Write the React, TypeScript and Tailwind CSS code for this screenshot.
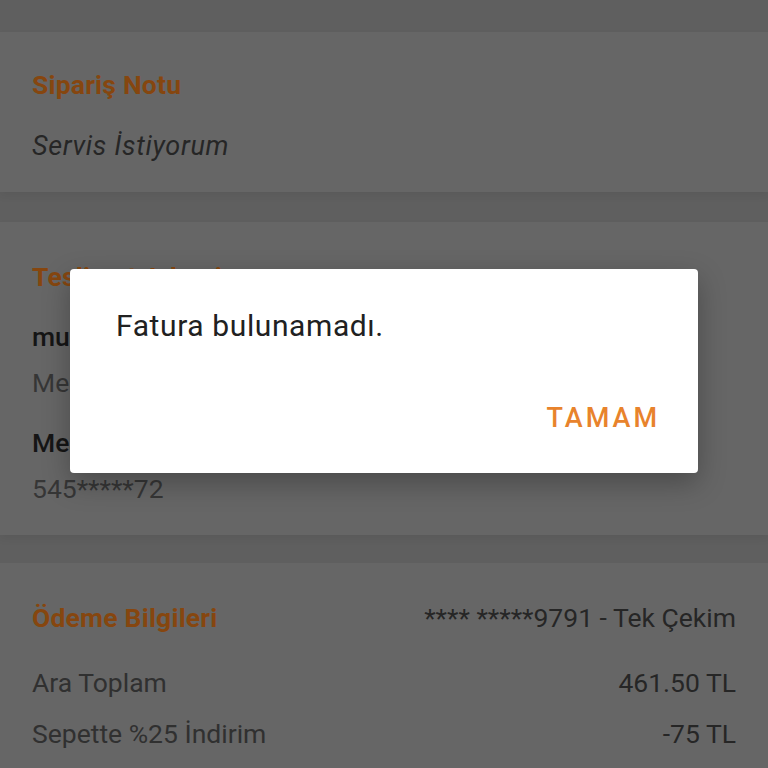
import React from "react";

const Row = ({ left, right, className }: { left: string; right: string; className?: string }) => (
  <div className={`flex items-center justify-between text-[26.5px] leading-[30px] ${className ?? ""}`}>
    <span className="text-[#303030]">{left}</span>
    <span className="text-[#262626]">{right}</span>
  </div>
);

const App = () => {
  return (
    <div className="relative h-[768px] w-[768px] overflow-hidden bg-[#5f5f5f] font-['Roboto','Liberation_Sans',sans-serif]">
      <div className="flex flex-col pt-[32px]">
        {/* Sipariş notu */}
        <div className="bg-[#666666] px-[32px] pt-[38px] pb-[31px] shadow-[0_4px_8px_rgba(0,0,0,0.06)]">
          <div className="text-[26.5px] font-bold leading-[30px] tracking-[0.2px] text-[#86460f]">Sipariş Notu</div>
          <div className="mt-[31px] text-[27px] italic leading-[30px] tracking-[0.65px] text-[#262626]">Servis İstiyorum</div>
        </div>

        {/* Teslimat adresi */}
        <div className="mt-[30px] bg-[#666666] px-[32px] pt-[40px] pb-[31px] shadow-[0_4px_8px_rgba(0,0,0,0.06)]">
          <div className="text-[26.5px] font-bold leading-[30px] tracking-[0.2px] text-[#86460f]">Teslimat Adresi</div>
          <div className="mt-[30px] text-[26.5px] font-medium leading-[30px] text-[#151515]">mustafa yılmaz</div>
          <div className="mt-[16px] text-[26.5px] leading-[30px] text-[#363636]">Merkez Mahallesi</div>
          <div className="mt-[30px] text-[26.5px] font-medium leading-[30px] text-[#151515]">Mesaj Telefonu</div>
          <div className="mt-[16px] text-[26.5px] leading-[30px] text-[#363636]">545*****72</div>
        </div>

        {/* Ödeme bilgileri */}
        <div className="mt-[28px] bg-[#666666] px-[32px] pt-[40px] pb-[40px]">
          <div className="flex items-center justify-between leading-[30px]">
            <span className="text-[26.5px] font-bold tracking-[0.2px] text-[#86460f]">Ödeme Bilgileri</span>
            <span className="text-[26.5px] text-[#262626]">**** *****9791 - Tek Çekim</span>
          </div>
          <Row className="mt-[35px]" left="Ara Toplam" right="461.50 TL" />
          <Row className="mt-[21px]" left="Sepette %25 İndirim" right="-75 TL" />
        </div>
      </div>

      {/* dialog */}
      <div className="absolute left-[70px] top-[269px] w-[628px] rounded-[4px] bg-white pl-[46px] pr-[38px] pt-[40px] pb-[40px] shadow-[0_10px_28px_rgba(0,0,0,0.28)]">
        <div className="text-[30px] leading-[34px] tracking-[0.6px] text-[#212121]">Fatura bulunamadı.</div>
        <div className="mt-[60px] flex justify-end">
          <span className="text-[27px] font-medium leading-[30px] tracking-[3px] text-[#e8832c]">TAMAM</span>
        </div>
      </div>
    </div>
  );
};

export default App;
